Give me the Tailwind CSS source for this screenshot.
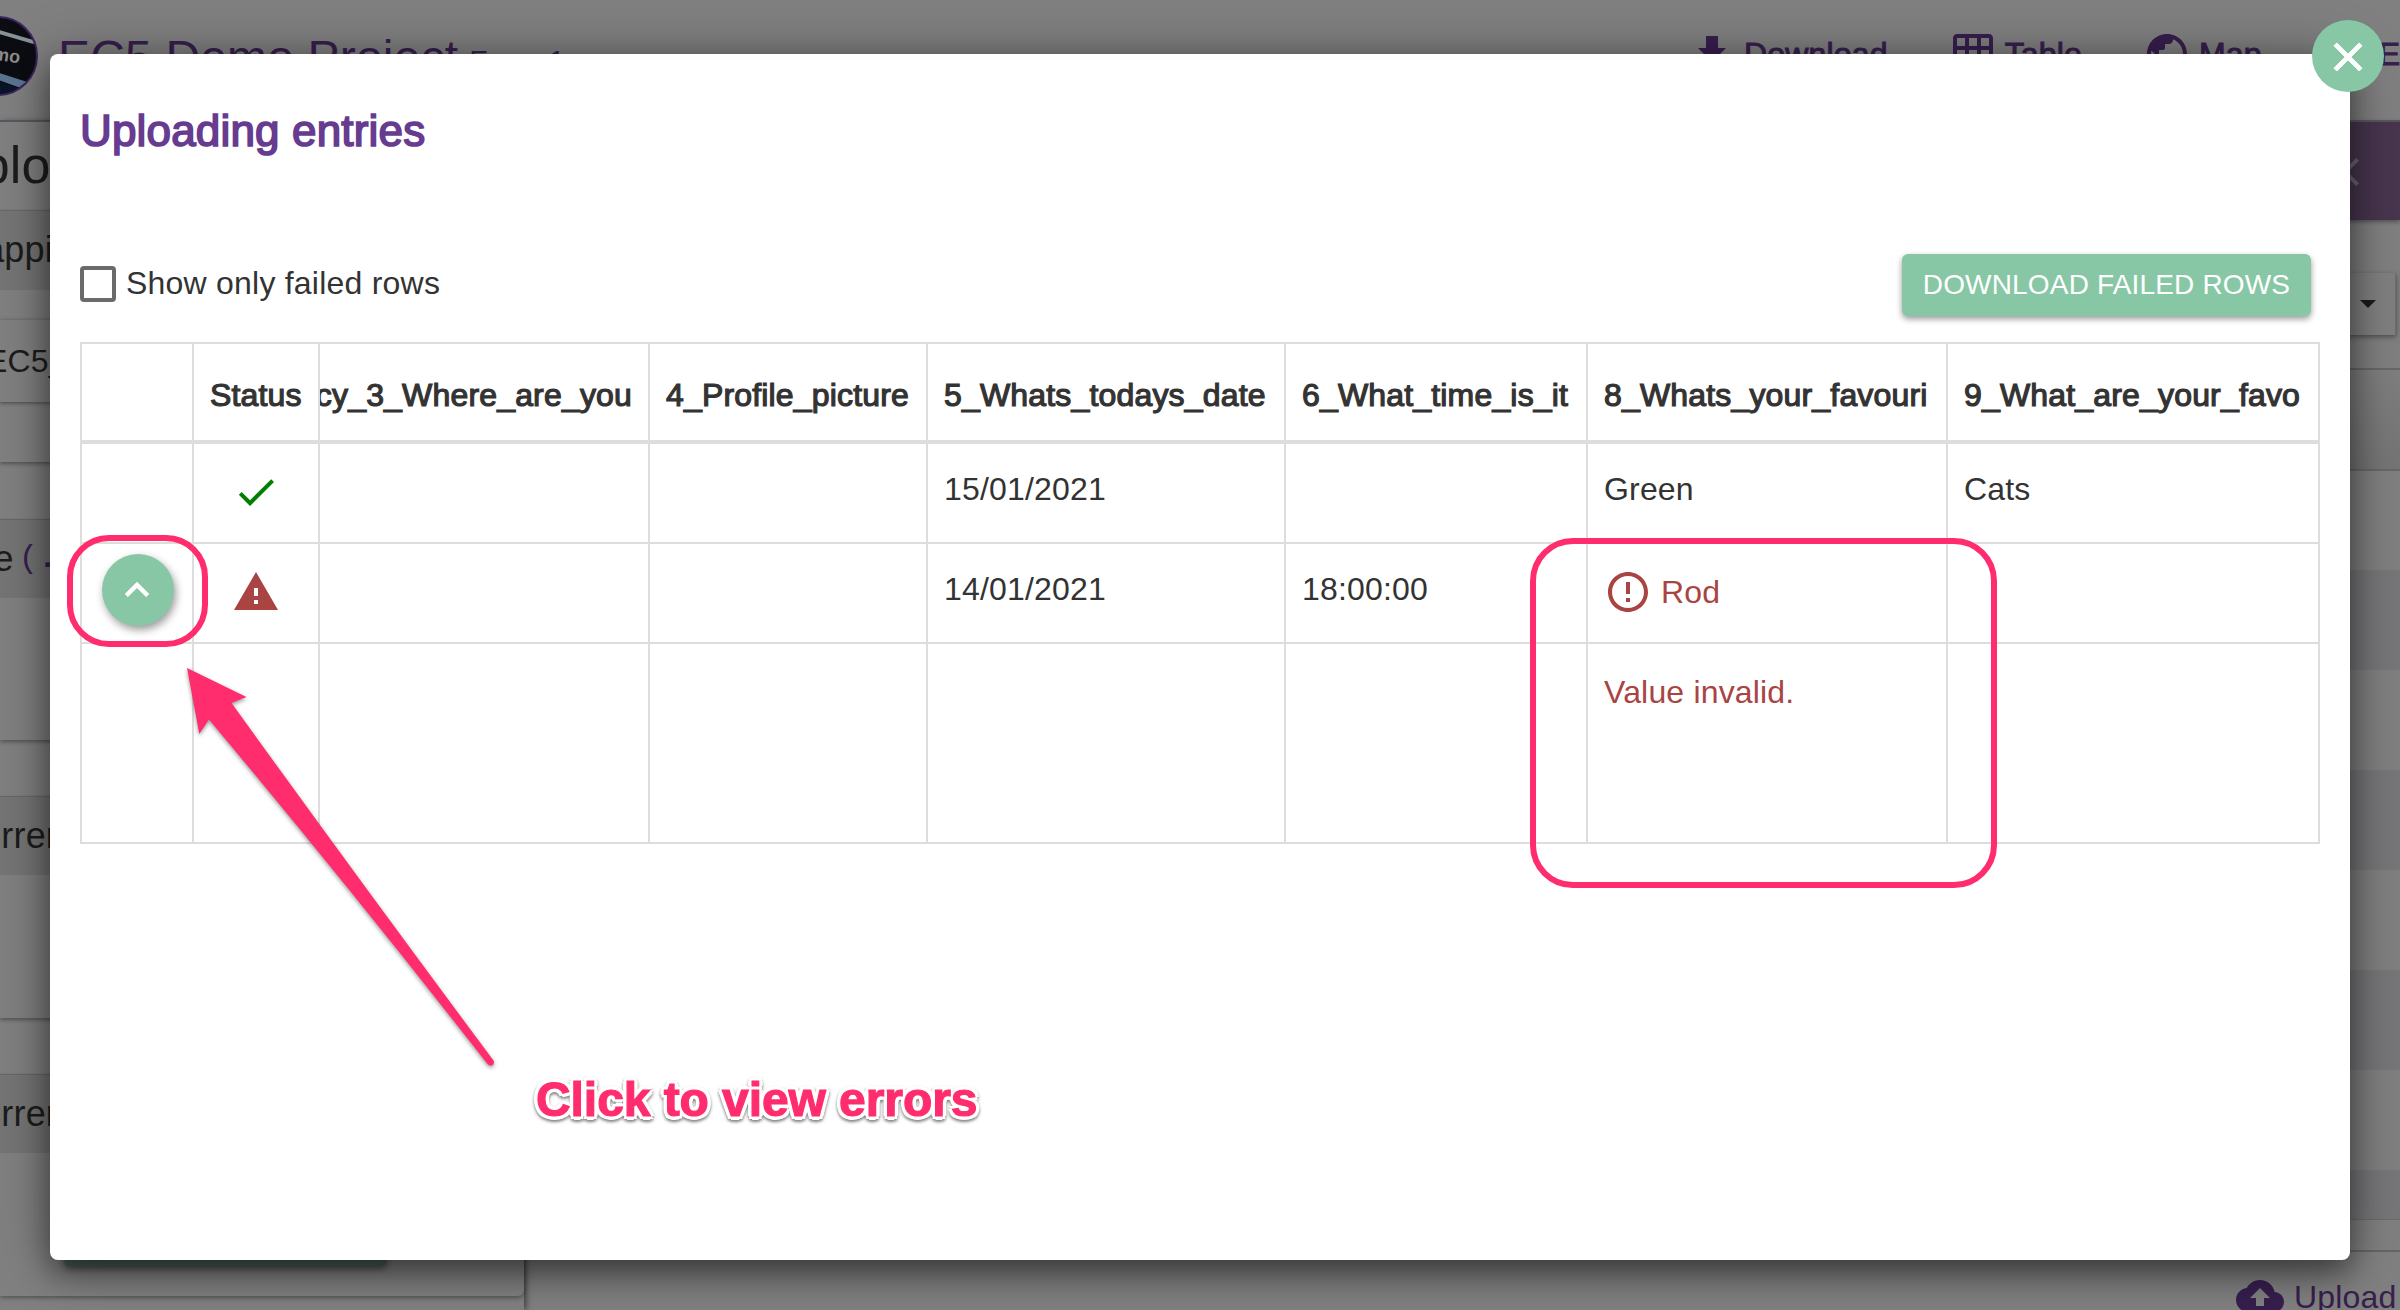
<!DOCTYPE html>
<html lang="en">
<head>
<meta charset="utf-8">
<title>Uploading entries</title>
<script src="https://cdn.jsdelivr.net/npm/@tailwindcss/browser@4"></script>
</head>
<body class="relative w-[2400px] h-[1310px] overflow-hidden bg-[#808080] font-['Liberation_Sans',Arial,sans-serif] text-[32px] leading-[44px] tracking-[0.17px] text-[#333]">

<!-- dimmed page behind the dialog -->
<div class="flex h-full flex-col text-[#1c1c1c]">
  <header class="relative flex h-[122px] shrink-0 border-b-2 border-[#5b5760] text-[#371f4e]">
    <div class="absolute left-[-42px] top-[16px] size-20 overflow-hidden rounded-full border-2 border-[#3f2560] bg-[#0b0d12]">
      <svg viewBox="0 0 76 76" class="size-full"><path d="M36 11l44 13v4L36 15z" fill="#8a9299"/><path d="M30 52l50 16v9L30 59z" fill="#5a7490"/><path d="M30 60l50 18H30z" fill="#0a1428"/></svg>
      <span class="absolute right-[15px] top-[24px] rotate-8 text-[18px] leading-6 font-bold text-[#8c8c8c]">demo</span>
    </div>
    <div class="ml-[58px] mt-[34px] flex items-start whitespace-nowrap">
      <span class="text-[48px] leading-[48px]">EC5 Demo Project</span>
      <span class="ml-[11px] mt-[7px] text-[30px] leading-[40px]">Form 1</span>
    </div>
    <nav class="absolute left-[1688px] top-[30px] flex gap-[61px] whitespace-nowrap [-webkit-text-stroke:1px_currentColor]">
      <span class="flex gap-2"><svg class="size-12" viewBox="0 0 24 24" fill="currentColor"><path d="M19 9h-4V3H9v6H5l7 7 7-7zM5 18v2h14v-2H5z"/></svg><span class="mt-[2px]">Download</span></span>
      <span class="flex gap-2"><svg class="size-12" viewBox="0 0 24 24" fill="currentColor"><path d="M20 2H4c-1.100 0-2 .9-2 2v16c0 1.100.9 2 2 2h16c1.100 0 2-.9 2-2V4c0-1.100-.9-2-2-2zM8 20H4v-4h4v4zm0-6H4v-4h4v4zm0-6H4V4h4v4zm6 12h-4v-4h4v4zm0-6h-4v-4h4v4zm0-6h-4V4h4v4zm6 12h-4v-4h4v4zm0-6h-4v-4h4v4zm0-6h-4V4h4v4z"/></svg><span class="mt-[2px]">Table</span></span>
      <span class="flex gap-2"><svg class="size-12" viewBox="0 0 24 24" fill="currentColor"><path d="M12 2C6.480 2 2 6.480 2 12s4.480 10 10 10 10-4.480 10-10S17.520 2 12 2zm-1 17.930c-3.950-.49-7-3.850-7-7.930 0-.62.080-1.210.210-1.790L9 15v1c0 1.100.9 2 2 2v1.930zm6.900-2.540c-.26-.81-1-1.390-1.900-1.390h-1v-3c0-.55-.45-1-1-1H8v-2h2c.55 0 1-.45 1-1V7h2c1.100 0 2-.9 2-2v-.41c2.930 1.190 5 4.060 5 7.410 0 2.080-.8 3.970-2.100 5.390z"/></svg><span class="mt-[2px]">Map</span></span>
      <span class="ml-14 mt-[2px]">Exit</span>
    </nav>
  </header>

  <main class="flex grow justify-between">
    <!-- left cards -->
    <div class="flex w-[524px] flex-col whitespace-nowrap text-[36px] shadow-[2px_0_6px_rgba(0,0,0,0.5)]">
      <h1 class="-ml-[57px] h-[89px] pt-[17px] text-[52px] leading-[52px]">Upload</h1>
      <section class="h-[251px] shadow-[0_2px_4px_rgba(0,0,0,0.35)]">
        <div class="flex h-[79px] items-center bg-[#757575] pb-px [box-shadow:0_-1px_1px_rgba(0,0,0,0.15)]"><span class="-ml-[46px]">Mapping</span></div>
        <div class="mt-[30px] flex h-[82px] items-center text-[32px] shadow-[0_1px_4px_rgba(0,0,0,0.45)]"><span class="-ml-[14px]">EC5_demo</span></div>
      </section>
      <section class="mt-[58px] h-[220px] shadow-[0_2px_4px_rgba(0,0,0,0.35)]">
        <div class="flex h-[78px] items-center bg-[#757575] pb-px [box-shadow:0_-1px_1px_rgba(0,0,0,0.15)]"><span class="-ml-[45px]">File</span><span class="ml-[5px] font-['Liberation_Mono',monospace] text-[32px] text-[#371f4e]">(<b>.csv</b>)</span></div>
      </section>
      <section class="mt-[57px] h-[221px] shadow-[0_2px_4px_rgba(0,0,0,0.35)]">
        <div class="flex h-[78px] items-center bg-[#757575] pb-px [box-shadow:0_-1px_1px_rgba(0,0,0,0.15)]"><span class="-ml-[45px]">Current row</span></div>
      </section>
      <section class="mt-[57px] h-[221px] rounded-br-md shadow-[0_2px_4px_rgba(0,0,0,0.35)]">
        <div class="flex h-[78px] items-center bg-[#757575] pb-px [box-shadow:0_-1px_1px_rgba(0,0,0,0.15)]"><span class="-ml-[45px]">Current file</span></div>
        <div class="ml-16 mt-[51px] h-[62px] w-[323px] rounded-md bg-[#446454] shadow-[0_3px_6px_rgba(0,0,0,0.4)]"></div>
      </section>
    </div>

    <!-- right table -->
    <div class="flex w-[200px] flex-col">
      <div class="-mt-[2px] flex h-[100px] shrink-0 items-center bg-[#48364f] shadow-[0_2px_4px_rgba(0,0,0,0.35)]">
        <svg class="ml-[121px] mt-[4px] size-12 text-[#6f6776]" viewBox="0 0 24 24" fill="currentColor"><path d="M19 6.410L17.590 5 12 10.590 6.410 5 5 6.410 10.590 12 5 17.590 6.410 19 12 13.410 17.590 19 19 17.590 13.410 12z"/></svg>
      </div>
      <div class="mt-[53px] flex h-[62px] w-[196px] shrink-0 items-center justify-end border-r border-[#6c6c6c] pr-[19px] shadow-[0_2px_5px_rgba(0,0,0,0.4)]"><span class="border-x-[8px] border-t-[8px] border-x-transparent border-t-[#1a1a1a]"></span></div>
      <div class="mt-[33px] h-[103px] shrink-0 border-y-2 border-[#686868] bg-linear-to-b from-[#7f7f7f] to-[#757575]"></div>
      <div class="h-[99px] shrink-0"></div>
      <div class="h-[100px] shrink-0 bg-[#77777a]"></div>
      <div class="h-[100px] shrink-0"></div>
      <div class="h-[100px] shrink-0 bg-[#77777a]"></div>
      <div class="h-[100px] shrink-0"></div>
      <div class="h-[100px] shrink-0 bg-[#77777a]"></div>
      <div class="h-[100px] shrink-0"></div>
      <div class="h-[50px] shrink-0 border-b border-[#6c6c6c] bg-[#77777a]"></div>
      <div class="mt-[30px] flex h-[60px] shrink-0 items-start gap-[10px] border-t-2 border-[#666] pl-[36px] pt-[22px] text-[#371f4e]">
        <svg class="-mt-[2px] size-12 shrink-0" viewBox="0 0 24 24" fill="currentColor"><path d="M19.350 10.040C18.670 6.590 15.640 4 12 4 9.110 4 6.600 5.640 5.350 8.040 2.340 8.360 0 10.910 0 14c0 3.310 2.690 6 6 6h13c2.760 0 5-2.240 5-5 0-2.640-2.050-4.780-4.650-4.960zM14 13v4h-4v-4H7l5-5 5 5h-3z"/></svg>
        <span class="mt-px">Upload</span>
      </div>
    </div>
  </main>
</div>

<!-- dialog -->
<div class="absolute left-[50px] top-[54px] flex h-[1206px] w-[2300px] flex-col rounded-lg bg-white px-[30px] shadow-[0_12px_30px_rgba(0,0,0,0.45),0_4px_60px_rgba(0,0,0,0.3)]">
  <h2 class="mt-[51px] text-[44px] leading-[52px] text-[#673c90] [-webkit-text-stroke:1.7px_currentColor]">Uploading entries</h2>
  <div class="mt-[97px] flex h-[62px] items-center justify-between pr-[9px]">
    <label class="-mt-[2px] flex items-center gap-[10px] tracking-[0.22px]"><span class="size-9 rounded-sm border-4 border-[#6b6b6b]"></span><span class="-mt-[3px]">Show only failed rows</span></label>
    <button class="h-[62px] w-[409px] rounded-md bg-[#88c7a6] text-[28px] text-white shadow-[0_3px_6px_rgba(0,0,0,0.4)]">DOWNLOAD FAILED ROWS</button>
  </div>

  <table class="mt-[26px] w-[2240px] table-fixed border-collapse border-2 border-[#ddd]">
    <colgroup><col class="w-[112px]"><col class="w-[126px]"><col class="w-[330px]"><col class="w-[278px]"><col class="w-[358px]"><col class="w-[302px]"><col class="w-[360px]"><col></colgroup>
    <thead>
      <tr class="h-[99px] whitespace-nowrap text-left [-webkit-text-stroke:1.2px_currentColor] *:border-r-2 *:border-b-4 *:border-[#ddd] *:px-[16px] *:pt-[5px] *:font-normal">
        <th></th><th>Status</th>
        <th><div class="flex -ml-[16px] justify-end overflow-hidden"><span>accuracy_3_Where_are_you</span></div></th>
        <th>4_Profile_picture</th><th>5_Whats_todays_date</th><th>6_What_time_is_it</th><th>8_Whats_your_favouri</th><th>9_What_are_your_favo</th>
      </tr>
    </thead>
    <tbody class="align-top">
      <tr class="h-[101px] *:border-r-2 *:border-b-2 *:border-[#ddd] *:px-[16px] *:pt-[23px]">
        <td></td>
        <td><svg class="mx-auto mt-px size-12 text-[#008000]" viewBox="0 0 24 24" fill="currentColor"><path d="M9 16.170L4.830 12l-1.420 1.410L9 19 21 7l-1.410-1.410z"/></svg></td>
        <td></td><td></td><td>15/01/2021</td><td></td><td>Green</td><td>Cats</td>
      </tr>
      <tr class="h-[100px] *:border-r-2 *:border-b-2 *:border-[#ddd] *:px-[16px]">
        <td class="pt-[10px]"><div class="ml-1 flex size-[72px] items-center justify-center rounded-full bg-[#88c7a6] text-white shadow-[2px_4px_8px_rgba(0,0,0,0.4)]"><svg class="-ml-[2px] size-12" viewBox="0 0 24 24" fill="currentColor"><path d="M12 8l-6 6 1.410 1.410L12 10.830l4.590 4.580L18 14z" stroke="currentColor" stroke-width=".3"/></svg></div></td>
        <td class="pt-[24px]"><svg class="mx-auto size-12 text-[#a94442]" viewBox="0 0 24 24" fill="currentColor"><path d="M1 21h22L12 2 1 21zm12-3h-2v-2h2v2zm0-4h-2v-4h2v4z"/></svg></td>
        <td></td><td></td><td class="pt-[23px]">14/01/2021</td><td class="pt-[23px]">18:00:00</td>
        <td class="pt-[24px]"><div class="flex items-center gap-[9px] text-[#a94442]"><svg class="size-12" viewBox="0 0 24 24" fill="currentColor"><path d="M11 15h2v2h-2zm0-8h2v6h-2zm.990-5C6.470 2 2 6.480 2 12s4.470 10 9.990 10C17.520 22 22 17.520 22 12S17.520 2 11.990 2zM12 20c-4.420 0-8-3.580-8-8s3.580-8 8-8 8 3.580 8 8-3.580 8-8 8z"/></svg>Rod</div></td>
        <td></td>
      </tr>
      <tr class="h-[200px] *:border-r-2 *:border-b-2 *:border-[#ddd] *:px-[16px] *:pt-[26px]">
        <td></td><td></td><td></td><td></td><td></td><td></td><td class="text-[#a94442]">Value invalid.</td><td></td>
      </tr>
    </tbody>
  </table>
</div>

<!-- close button -->
<button class="absolute left-[2312px] top-[20px] flex size-[72px] items-center justify-center rounded-full bg-[#88c7a6] text-white"><svg class="mt-[2px] size-12" viewBox="0 0 24 24" fill="currentColor" stroke="currentColor" stroke-width=".5"><path d="M19 6.410L17.590 5 12 10.590 6.410 5 5 6.410 10.590 12 5 17.590 6.410 19 12 13.410 17.590 19 19 17.590 13.410 12z"/></svg></button>

<!-- annotations -->
<div class="absolute left-[67px] top-[535px] h-[112px] w-[141px] rounded-[42px] border-[6px] border-[#ff2d6e]"></div>
<div class="absolute left-[1530px] top-[538px] h-[350px] w-[467px] rounded-[43px] border-[6px] border-[#ff2d6e]"></div>
<svg class="absolute left-[180px] top-[660px] drop-shadow-[0_2px_2px_rgba(0,0,0,0.4)]" width="330" height="420" viewBox="180 660 330 420"><path d="M187 668L246.500 697 231.500 703Q365 888 493.500 1060.500Q495 1064 492 1065.500Q489.500 1066 487.500 1064Q350 888 209 719.500L199.300 734z" fill="#ff2d6e"/></svg>
<div class="absolute left-[536px] top-[1071px] whitespace-nowrap text-[48px] leading-[58px] font-bold tracking-[-0.07px] text-[#ff2d6e] [-webkit-text-stroke:1.2px_#ff2d6e] [text-shadow:4px_0_white,-4px_0_white,0_4px_white,0_-4px_white,3px_3px_white,-3px_3px_white,3px_-3px_white,-3px_-3px_white] drop-shadow-[0_2px_1.5px_rgba(0,0,0,0.5)]">Click to view errors</div>
</body>
</html>
